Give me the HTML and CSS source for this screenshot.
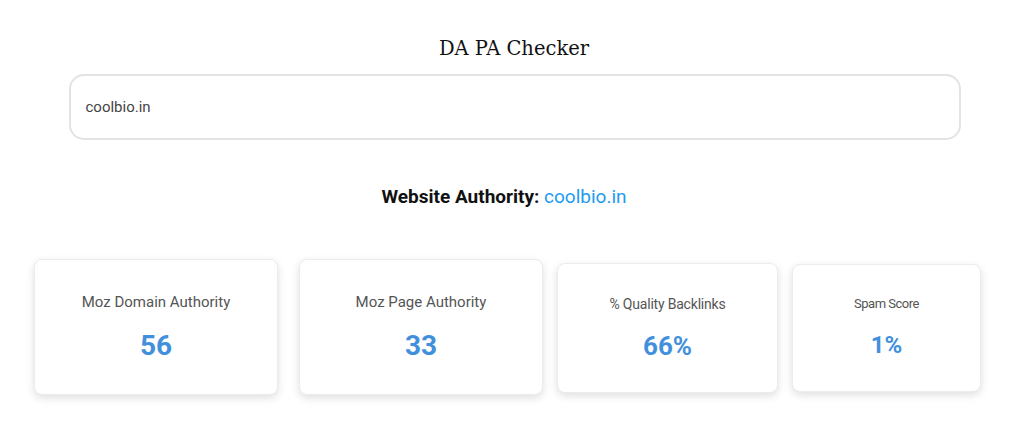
FILE: index.html
```html
<!DOCTYPE html>
<html>
<head>
<meta charset="utf-8">
<link rel="stylesheet" href="styles.css">
</head>
<body>
<main class="page">
  <h1 class="title">DA PA Checker</h1>
  <div class="input-box">coolbio.in</div>
  <h2 class="result">Website Authority: <span class="domain">coolbio.in</span></h2>
  <div class="cards">
    <div class="card card-da">
      <div class="label">Moz Domain Authority</div>
      <div class="value">56</div>
    </div>
    <div class="card card-pa">
      <div class="label">Moz Page Authority</div>
      <div class="value">33</div>
    </div>
    <div class="card card-ql">
      <div class="label">% Quality Backlinks</div>
      <div class="value">66%</div>
    </div>
    <div class="card card-ss">
      <div class="label">Spam Score</div>
      <div class="value">1%</div>
    </div>
  </div>
</main>
</body>
</html>
```
FILE: styles.css
```css
html, body {
  margin: 0;
  padding: 0;
  background: #fff;
}
body {
  font-family: Roboto, "Liberation Sans", sans-serif;
  color: #333;
}
.page {
  display: flex;
  flex-direction: column;
  align-items: center;
  padding-bottom: 24px;
}
.title {
  font-family: "DejaVu Serif", serif;
  font-weight: normal;
  font-size: 19.5px;
  line-height: 26px;
  color: #111;
  margin: 36px 0 12px 4px;
}
.input-box {
  box-sizing: border-box;
  width: 892px;
  height: 66px;
  margin-left: 5px;
  border: 2px solid #e3e3e3;
  border-radius: 15px;
  padding: 0 0 0 15px;
  display: flex;
  align-items: center;
  font-size: 15px;
  color: #444;
}
.result {
  font-size: 19px;
  font-weight: bold;
  line-height: 24px;
  color: #111;
  margin: 45px 16px 0 0;
}
.domain {
  font-weight: normal;
  color: #1e9bf0;
}
.cards {
  display: flex;
  align-items: center;
  gap: 14px;
  margin-top: 50px;
  margin-right: 9px;
}
.card {
  box-sizing: border-box;
  background: #fff;
  border: 1px solid #ececec;
  border-radius: 8px;
  box-shadow: 0 3px 8px rgba(0, 0, 0, 0.13);
  display: flex;
  flex-direction: column;
  align-items: center;
  justify-content: center;
}
.card-da, .card-pa {
  width: 244px;
  height: 136px;
}
.card-da {
  margin-right: 7px;
}
.card-ql {
  width: 221px;
  height: 130px;
  margin-top: 2px;
}
.card-ss {
  width: 189px;
  height: 128px;
  margin-top: 2px;
}
.label {
  font-size: 15px;
  color: #555;
  line-height: 20px;
}
.value {
  font-size: 28px;
  font-weight: bold;
  color: #4290dc;
  line-height: 34px;
  margin-top: 17px;
}
.card-ql .label {
  font-size: 14px;
  letter-spacing: -0.2px;
}
.card-ql .value {
  font-size: 26px;
  margin-top: 15px;
}
.card-ss .label {
  font-size: 13px;
  letter-spacing: -0.5px;
}
.card-ss .value {
  font-size: 24px;
  margin-top: 14px;
}
```
